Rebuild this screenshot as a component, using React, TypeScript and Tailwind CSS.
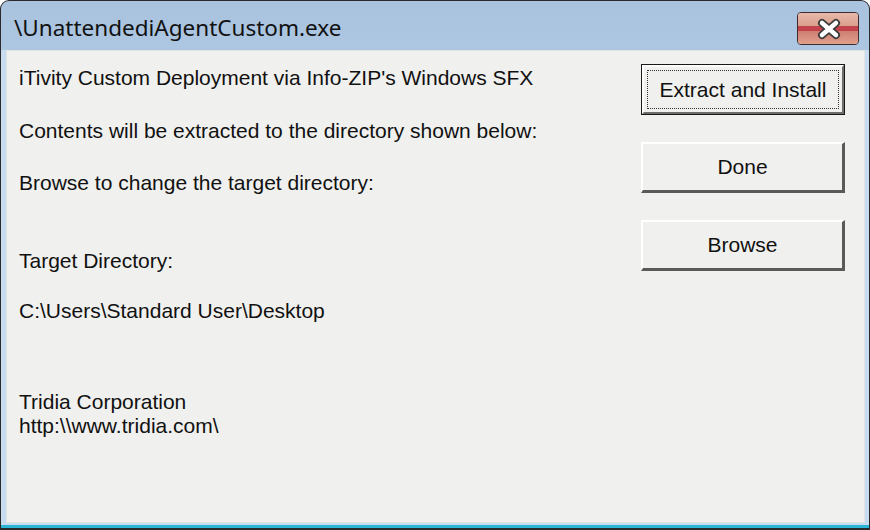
import React from "react";

function CloseButton() {
  return (
    <div className="relative w-[62px] h-[33px] rounded-[4px] border border-[#3b2b2b] overflow-hidden shadow-[inset_0_0_0_1px_rgba(255,255,255,0.35)]">
      <div className="flex flex-col h-full">
        <div className="h-[13px] bg-gradient-to-b from-[#e8b9aa] to-[#d99f8d]" />
        <div className="h-[5px] bg-[#c3434c]" />
        <div className="flex-1 bg-gradient-to-b from-[#cf7e72] to-[#e0a08b]" />
      </div>
      <svg className="absolute left-[17px] top-[5px]" width="28" height="22" viewBox="0 0 28 22">
        <path d="M7 5 L21 17 M21 5 L7 17" stroke="#3a3a3a" strokeWidth="8" strokeLinecap="round" />
        <path d="M7 5 L21 17 M21 5 L7 17" stroke="#ffffff" strokeWidth="4.5" strokeLinecap="round" />
      </svg>
    </div>
  );
}

function WinButton({ label, isDefault }: { label: string; isDefault?: boolean }) {
  if (isDefault) {
    return (
      <div className="w-[204px] h-[51px] border border-[#1a1a1a] bg-[#f0f0ee]">
        <div className="h-full border-t-2 border-l-2 border-t-[#ffffff] border-l-[#ffffff] border-b-2 border-r-2 border-b-[#6e6e6e] border-r-[#6e6e6e] p-[3px]">
          <div className="h-full border border-dotted border-[#333] flex items-center justify-center text-[21px] text-[#111]">
            {label}
          </div>
        </div>
      </div>
    );
  }
  return (
    <div className="w-[204px] h-[51px] border-t-2 border-l-2 border-t-[#ffffff] border-l-[#ffffff] border-b-[3px] border-r-[3px] border-b-[#5a5a5a] border-r-[#5a5a5a] bg-[#f0f0ee] flex items-center justify-center text-[21px] text-[#111]">
      {label}
    </div>
  );
}

export default function App() {
  return (
    <div className="w-[870px] h-[530px] bg-white" style={{ fontFamily: '"Liberation Sans", Arial, sans-serif' }}>
      <div className="w-full h-full flex flex-col rounded-t-[9px] border border-b-2 border-[#2a2a2a] bg-gradient-to-b from-[#a9c3df] via-[#bdd4ec] to-[#c8dcf0] overflow-hidden">
        {/* Title bar */}
        <div className="h-[49px] flex items-center justify-between pl-[13px] pr-[10px] shrink-0">
          <div className="text-[22.5px] text-[#111] pt-[4px]" style={{ fontFamily: '"Noto Sans", "Open Sans", sans-serif' }}>
            \UnattendediAgentCustom.exe
          </div>
          <div className="pt-[5px]">
            <CloseButton />
          </div>
        </div>
        {/* Client frame */}
        <div className="flex-1 flex pl-[5px] pr-[4px] pb-[2px] bg-[#c8dcf0] border-b-[3px] border-b-[#2bb4d6]">
          <div className="flex-1 flex border border-[#dfe3e6] bg-[#f0f0ee] pt-[15px] pl-[12px] pr-[19px]">
            <div className="flex-1 flex flex-col text-[21px] text-[#111] leading-[24px]">
              <div>iTivity Custom Deployment via Info-ZIP's Windows SFX</div>
              <div className="mt-[29px]">Contents will be extracted to the directory shown below:</div>
              <div className="mt-[28px]">Browse to change the target directory:</div>
              <div className="mt-[54px]">Target Directory:</div>
              <div className="mt-[26px]">C:\Users\Standard User\Desktop</div>
              <div className="mt-[67px]">Tridia Corporation</div>
              <div>http:\\www.tridia.com\</div>
            </div>
            <div className="flex flex-col gap-[27px] -mt-[2px]">
              <WinButton label="Extract and Install" isDefault />
              <WinButton label="Done" />
              <WinButton label="Browse" />
            </div>
          </div>
        </div>
      </div>
    </div>
  );
}
